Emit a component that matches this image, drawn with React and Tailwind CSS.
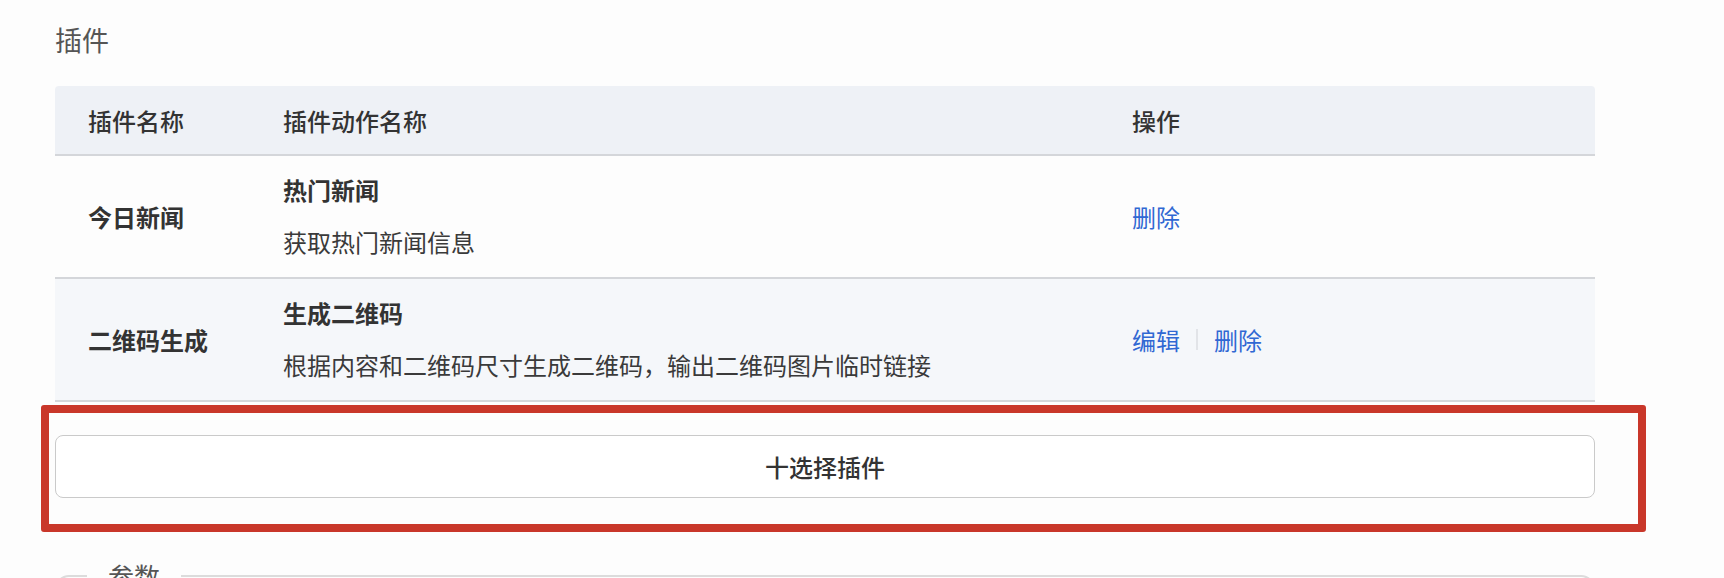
import React from 'react';

const plugins = [
  {
    name: '今日新闻',
    action: '热门新闻',
    desc: '获取热门新闻信息',
    ops: ['删除'],
    bg: 'bg-[#fdfdfd]',
  },
  {
    name: '二维码生成',
    action: '生成二维码',
    desc: '根据内容和二维码尺寸生成二维码，输出二维码图片临时链接',
    ops: ['编辑', '删除'],
    bg: 'bg-[#f5f7fa]',
  },
];

const font = { fontFamily: '"Noto Sans CJK SC", "Noto Sans", sans-serif' };

function Ops({ ops }) {
  return (
    <div className="flex items-center text-[24px] leading-[32px] text-[#3068d3]">
      {ops.map((op, i) => (
        <React.Fragment key={op}>
          {i > 0 && <span className="mx-[16px] h-[21px] w-[2px] bg-[#e2e4e8]" />}
          <span className="cursor-pointer">{op}</span>
        </React.Fragment>
      ))}
    </div>
  );
}

export default function App() {
  return (
    <div className="min-h-[578px] bg-[#fdfdfd] text-[#333]" style={font}>
      <div className="ml-[55px] w-[1540px] pt-[22px]">
        <div className="text-[27px] leading-[36px] text-[#555]">插件</div>

        {/* table */}
        <div className="mt-[28px]">
          <div className="grid h-[70px] grid-cols-[228px_849px_1fr] items-center rounded-t-[4px] border-b-2 border-[#d4d6da] bg-[#eef1f6] pt-[2px] text-[24px] font-medium leading-[32px]">
            <div className="pl-[33px]">插件名称</div>
            <div>插件动作名称</div>
            <div>操作</div>
          </div>
          {plugins.map(p => (
            <div
              key={p.name}
              className={`grid h-[123px] grid-cols-[228px_849px_1fr] items-center border-b-2 border-[#d4d6da] ${p.bg}`}
            >
              <div className="pl-[33px] text-[24px] font-semibold leading-[32px]">{p.name}</div>
              <div className="flex flex-col gap-[20px] pb-[2px] text-[24px] leading-[32px]">
                <div className="font-semibold">{p.action}</div>
                <div className="text-[#3a3a3a]">{p.desc}</div>
              </div>
              <Ops ops={p.ops} />
            </div>
          ))}
        </div>

        {/* add plugin */}
        <div className="relative mt-[33px]">
          <button className="flex h-[63px] w-full items-center justify-center rounded-[8px] border border-[#cacaca] bg-white text-[24px] font-medium text-[#333]">
            十选择插件
          </button>
          <div className="pointer-events-none absolute bottom-[-34px] left-[-14px] right-[-51px] top-[-30px] rounded-[3px] border-[8px] border-[#c9372a]" />
        </div>

        {/* params */}
        <fieldset className="mt-[58px] h-[160px] rounded-[14px] border-2 border-[#dcdcdc] pl-[30px]">
          <legend className="px-[21px] text-[26px] leading-[39px] text-[#555]">参数</legend>
        </fieldset>
      </div>
    </div>
  );
}
